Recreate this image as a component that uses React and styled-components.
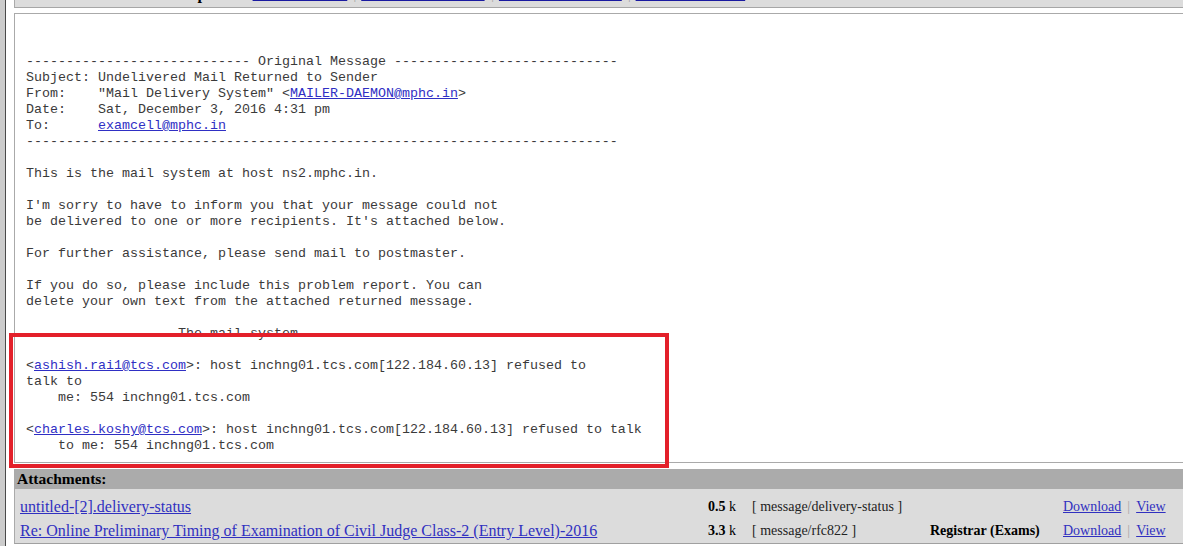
import React from 'react'
import styled, { createGlobalStyle } from 'styled-components'

const GlobalStyle = createGlobalStyle`
    body {
        margin: 0;
        background: #ffffff;
        overflow: hidden;
    }
`

const Page = styled.div`
    position: relative;
    display: flex;
    height: 546px;
    font-family: "Liberation Serif", "Times New Roman", serif;
    color: #000;
`

const Gutter = styled.div`
    width: 5px;
    background: #cccccc;
    border-right: 1px solid #4a4a4a;
`

const Main = styled.div`
    flex: 1;
    display: flex;
    flex-direction: column;
    padding-left: 8px;
    margin-right: -4px;
`

const OptionsBar = styled.div`
    height: 7px;
    display: flex;
    align-items: flex-end;
    overflow: hidden;
    background: #dcdcdc;
    border-left: 1px solid #aaaaaa;
    border-bottom: 1px solid #a6a6a6;
`

const OptionsRow = styled.div`
    display: flex;
    align-items: baseline;
    padding-left: 170px;
    padding-bottom: 4px;
    line-height: 16px;
`

const OptionsLabel = styled.b`
    font-size: 16px;
    margin-right: 8px;
`

const BarLink = styled.a`
    font-size: 13.33px;
    color: #1a1aa0;
    text-decoration: underline;
    width: ${p => p.$w}px;
`

const Sep = styled.span`
    font-size: 13.33px;
    color: #a0a0a0;
    margin: 0 5px;
`

const MessageBox = styled.div`
    margin-top: 5px;
    border: 1px solid #aaaaaa;
    padding: 8px 11px;
    background: #fff;
`

const Body = styled.pre`
    margin: 0;
    font-family: "Liberation Mono", "Courier New", monospace;
    font-size: 13.33px;
    line-height: 16px;
    color: #3a3a3a;
    white-space: pre;
`

const MailLink = styled.a`
    color: #2f2fc4;
    text-decoration: underline;
`

const Attachments = styled.div`
    margin-top: 6px;
    border-left: 1px solid #aaaaaa;
    border-bottom: 1px solid #a0a0a0;
    background: #dcdcdc;
`

const AttachHeader = styled.div`
    height: 20px;
    line-height: 20px;
    background: #ababab;
    padding-left: 2px;
    font-size: 15.5px;
    font-weight: bold;
`

const AttachList = styled.div`
    padding: 6px 0 0 5px;
`

const AttachRow = styled.div`
    display: grid;
    grid-template-columns: 670px 46px 194px 133px auto;
    align-items: center;
    height: 24px;
    font-size: 14px;
`

const FileLink = styled.a`
    font-size: 16px;
    color: #3030c0;
    text-decoration: underline;
    white-space: nowrap;
`

const Size = styled.span`
    text-align: right;
    white-space: nowrap;
    b {
        font-weight: bold;
    }
`

const Kind = styled.span`
    padding-left: 16px;
    color: #222;
    white-space: nowrap;
`

const Sender = styled.b`
    white-space: nowrap;
`

const Actions = styled.span`
    white-space: nowrap;
`

const ActionLink = styled.a`
    color: #3030c0;
    text-decoration: underline;
`

const Pipe = styled.span`
    color: #a8a8a8;
    margin: 0 6px;
`

const Highlight = styled.div`
    position: absolute;
    left: 9px;
    top: 333px;
    width: 660px;
    height: 135px;
    box-sizing: border-box;
    border: 4px solid #e3202a;
    pointer-events: none;
`

const options = [
    { label: 'View Full Header', w: 96 },
    { label: 'View Printable Version', w: 125 },
    { label: 'Download this as a file', w: 124 },
    { label: 'Add to Addressbook', w: 118 },
]

const attachments = [
    { name: 'untitled-[2].delivery-status', size: '0.5', type: '[ message/delivery-status ]', from: '' },
    {
        name: 'Re: Online Preliminary Timing of Examination of Civil Judge Class-2 (Entry Level)-2016',
        size: '3.3',
        type: '[ message/rfc822 ]',
        from: 'Registrar (Exams)',
    },
]

const dashes = n => '-'.repeat(n)

const App = () => {
  return (
    <Page>
        <GlobalStyle/>
        <Gutter/>

        <Main>
            <OptionsBar>
                <OptionsRow>
                    <OptionsLabel>Options:</OptionsLabel>
                    {options.map((o, i) => (
                        <React.Fragment key={o.label}>
                            {i > 0 && <Sep>|</Sep>}
                            <BarLink href="#" $w={o.w}>{o.label}</BarLink>
                        </React.Fragment>
                    ))}
                </OptionsRow>
            </OptionsBar>

            <MessageBox>
                <Body>
{`

${dashes(28)} Original Message ${dashes(28)}
Subject: Undelivered Mail Returned to Sender
From:    "Mail Delivery System" <`}<MailLink href="#">MAILER-DAEMON@mphc.in</MailLink>{`>
Date:    Sat, December 3, 2016 4:31 pm
To:      `}<MailLink href="#">examcell@mphc.in</MailLink>{`
${dashes(74)}

This is the mail system at host ns2.mphc.in.

I'm sorry to have to inform you that your message could not
be delivered to one or more recipients. It's attached below.

For further assistance, please send mail to postmaster.

If you do so, please include this problem report. You can
delete your own text from the attached returned message.

                   The mail system

<`}<MailLink href="#">ashish.rai1@tcs.com</MailLink>{`>: host inchng01.tcs.com[122.184.60.13] refused to
talk to
    me: 554 inchng01.tcs.com

<`}<MailLink href="#">charles.koshy@tcs.com</MailLink>{`>: host inchng01.tcs.com[122.184.60.13] refused to talk
    to me: 554 inchng01.tcs.com`}
                </Body>
            </MessageBox>

            <Attachments>
                <AttachHeader>Attachments:</AttachHeader>
                <AttachList>
                    {attachments.map(a => (
                        <AttachRow key={a.name}>
                            <FileLink href="#">{a.name}</FileLink>
                            <Size><b>{a.size}</b>&nbsp;k</Size>
                            <Kind>{a.type}</Kind>
                            <Sender>{a.from}</Sender>
                            <Actions>
                                <ActionLink href="#">Download</ActionLink>
                                <Pipe>|</Pipe>
                                <ActionLink href="#">View</ActionLink>
                            </Actions>
                        </AttachRow>
                    ))}
                </AttachList>
            </Attachments>
        </Main>

        <Highlight/>
    </Page>
  )
}

export default App
